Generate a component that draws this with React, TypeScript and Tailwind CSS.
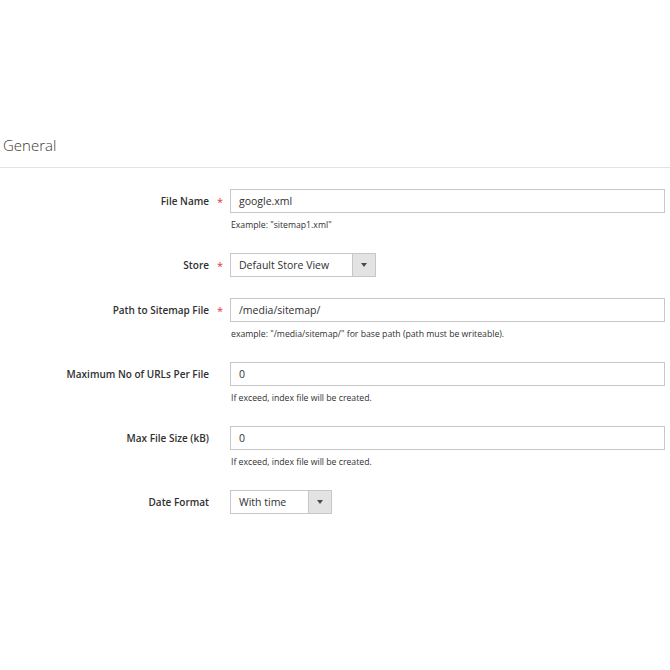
const font = { fontFamily: '"Open Sans", "Liberation Sans", sans-serif' };

type Row = {
  label: string;
  required?: boolean;
  kind: "input" | "select";
  value: string;
  note?: string;
  selectWidth?: string;
};

const rows: Row[] = [
  { label: "File Name", required: true, kind: "input", value: "google.xml", note: 'Example: "sitemap1.xml"' },
  { label: "Store", required: true, kind: "select", value: "Default Store View", selectWidth: "w-[146px]" },
  {
    label: "Path to Sitemap File",
    required: true,
    kind: "input",
    value: "/media/sitemap/",
    note: 'example: "/media/sitemap/" for base path (path must be writeable).',
  },
  { label: "Maximum No of URLs Per File", kind: "input", value: "0", note: "If exceed, index file will be created." },
  { label: "Max File Size (kB)", kind: "input", value: "0", note: "If exceed, index file will be created." },
  { label: "Date Format", kind: "select", value: "With time", selectWidth: "w-[102px]" },
];

function Select({ value, width }: { value: string; width?: string }) {
  return (
    <div className={`flex h-[24px] border border-[#c7c7c7] bg-white ${width}`}>
      <span className="flex-1 pl-[8px] text-[10.5px] leading-[22px] text-[#303030]">{value}</span>
      <span className="flex w-[23px] items-center justify-center border-l border-[#c7c7c7] bg-[#e3e3e3]">
        <svg width="6" height="4" viewBox="0 0 6 4">
          <path d="M0 0h6L3 4z" fill="#514943" />
        </svg>
      </span>
    </div>
  );
}

export default function App() {
  return (
    <div className="min-h-[670px] w-[670px] bg-white" style={font}>
      <div className="pt-[133px]">
        <h2 className="pl-[3px] text-[15px] font-light leading-[24px] text-[#41362f]">General</h2>
        <div className="mt-[10px] h-px w-full bg-[#e3e3e3]" />
      </div>

      <div className="pt-[21px]">
        {rows.map((row) => (
          <div key={row.label} className={`flex ${row.note ? "mb-[22px]" : "mb-[19px]"}`}>
            <div className="w-[210px] pr-px text-right text-[10px] font-semibold leading-[24px] text-[#303030]">
              {row.label}
            </div>
            <div className="w-[20px] text-center text-[11px] leading-[26px] text-[#e0373a]">
              {row.required ? "*" : ""}
            </div>
            <div className="w-[435px]">
              {row.kind === "input" ? (
                <div className="h-[24px] border border-[#c7c7c7] bg-white pl-[8px] text-[10.5px] leading-[22px] text-[#303030]">
                  {row.value}
                </div>
              ) : (
                <Select value={row.value} width={row.selectWidth} />
              )}
              {row.note && (
                <p className="mt-[6px] pl-px text-[8.7px] leading-[12px] text-[#303030]">{row.note}</p>
              )}
            </div>
          </div>
        ))}
      </div>
    </div>
  );
}
